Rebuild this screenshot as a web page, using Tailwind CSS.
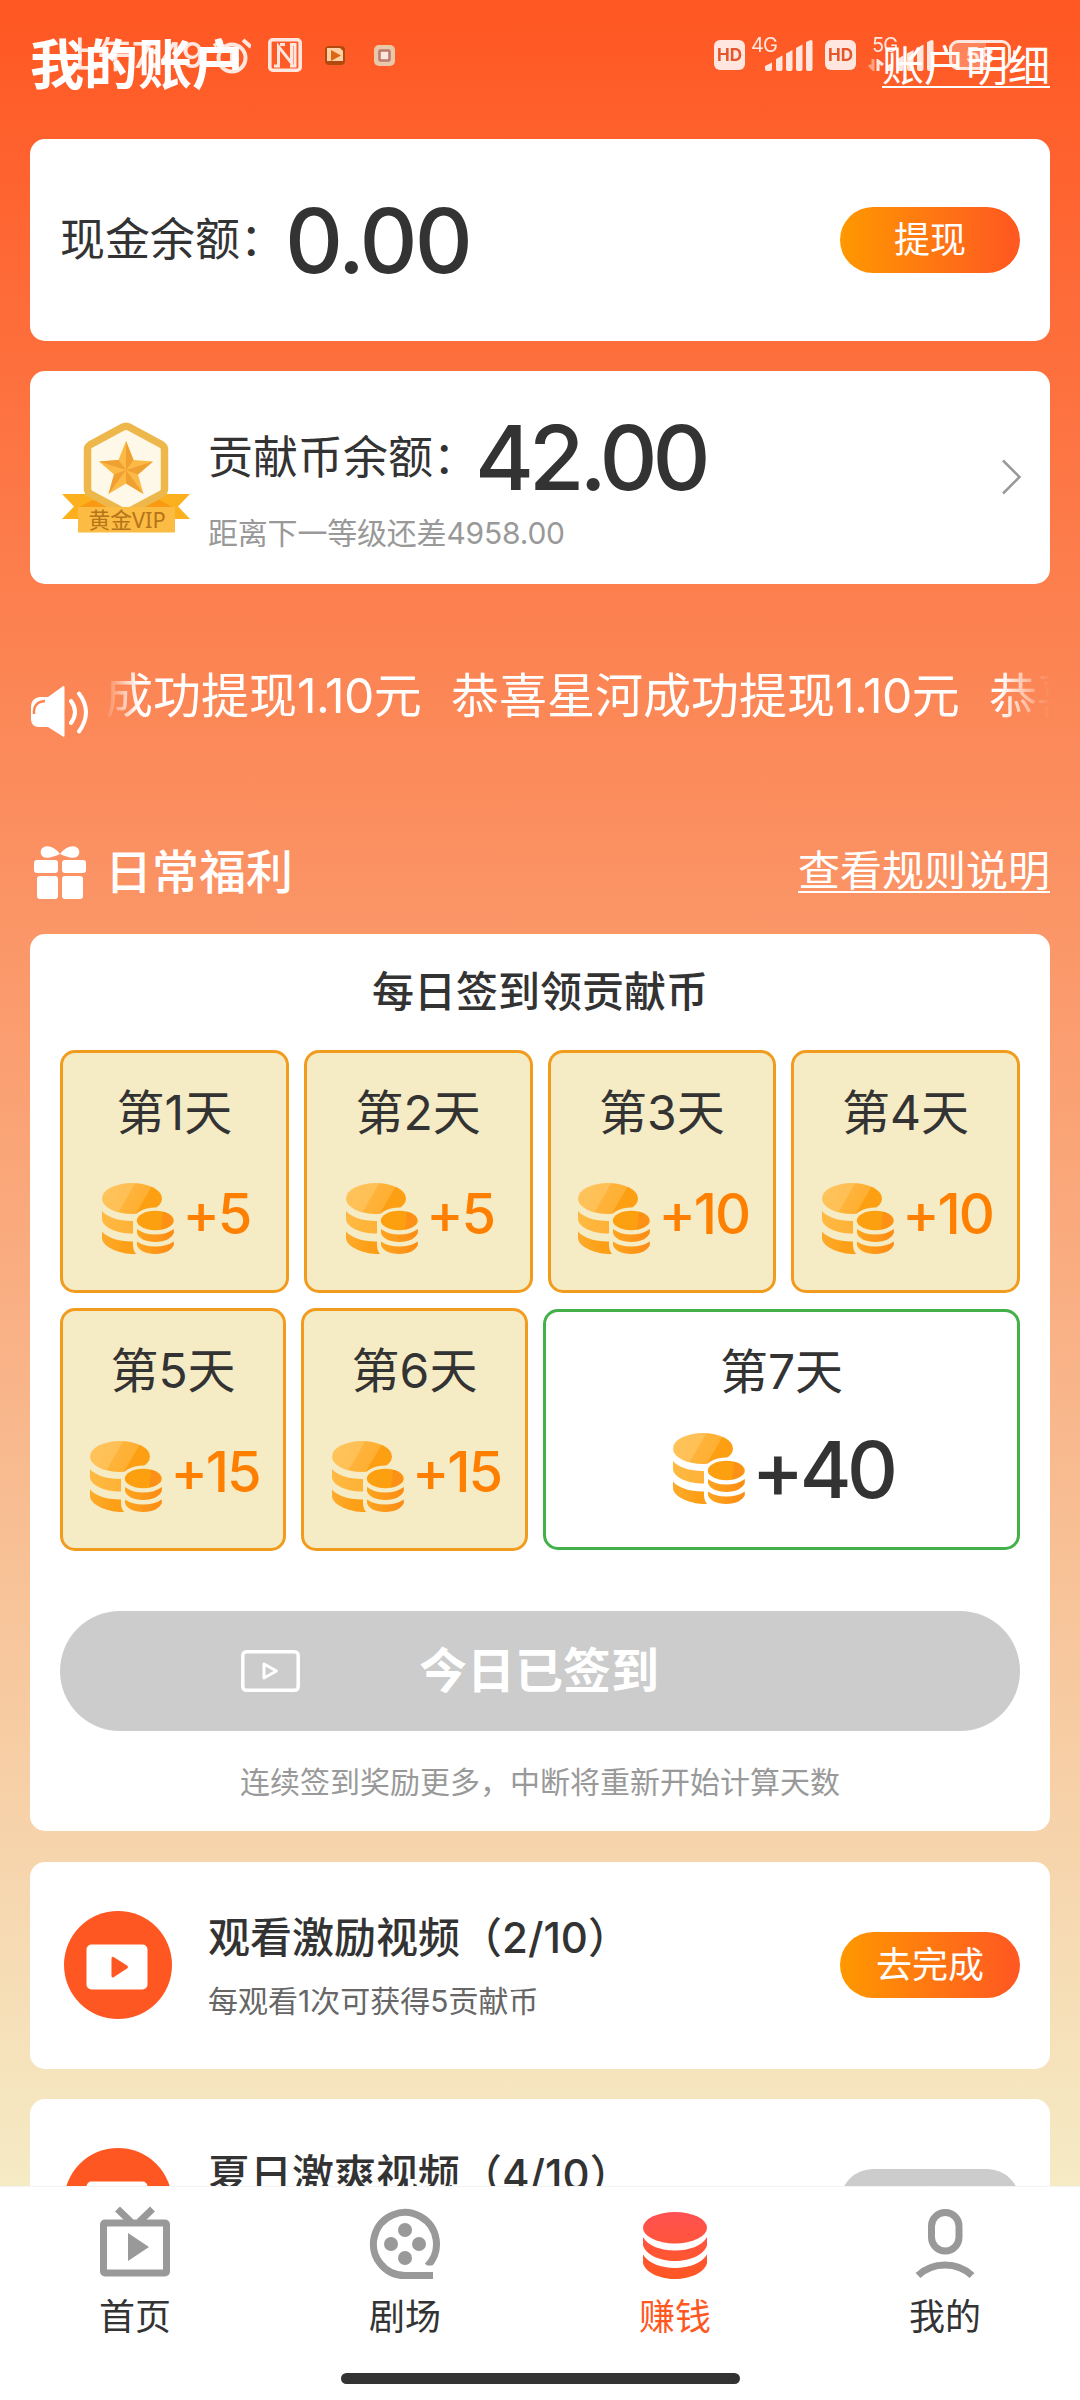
<!DOCTYPE html>
<html lang="zh-CN">
<head>
<meta charset="utf-8">
<title>我的账户</title>
<script src="https://cdn.jsdelivr.net/npm/@tailwindcss/browser@4"></script>
</head>
<body class="font-['Inter','Noto_Sans_CJK_SC',sans-serif] text-[#333]">

<svg class="absolute size-0" aria-hidden="true">
  <defs>
    <linearGradient id="coinTop" x1="0" y1="0" x2="1" y2="0.3">
      <stop offset="0" stop-color="#ffc45c"/><stop offset=".5" stop-color="#ffc055"/><stop offset=".52" stop-color="#ffb33a"/><stop offset=".78" stop-color="#ffb033"/><stop offset=".8" stop-color="#fd9f12"/><stop offset="1" stop-color="#fd9f12"/>
    </linearGradient>
    <linearGradient id="coinMid" x1="0" y1="0" x2="1" y2="0"><stop offset="0" stop-color="#ffb942"/><stop offset=".6" stop-color="#feb034"/></linearGradient>
    <linearGradient id="coinLow" x1="0" y1="0" x2="1" y2="0"><stop offset="0" stop-color="#fdab2c"/><stop offset=".4" stop-color="#fd9f16"/></linearGradient>
    <linearGradient id="coinSmall" x1="0" y1="0" x2="1" y2="0"><stop offset="0" stop-color="#fda51f"/><stop offset="1" stop-color="#fd8b13"/></linearGradient>
    <linearGradient id="earn" x1="0" y1="0" x2="0" y2="67" gradientUnits="userSpaceOnUse"><stop offset="0" stop-color="#ff5252"/><stop offset="1" stop-color="#ff5722"/></linearGradient>
    <mask id="coinGap" maskUnits="userSpaceOnUse" x="0" y="0" width="72" height="72">
      <rect width="72" height="72" fill="#fff"/>
      <path d="M31 38a22.5 13.5 0 0 1 45 0V72H35Q31 68 31 62Z" fill="#000"/>
    </mask>
  </defs>
  <symbol id="coins" viewBox="0 0 72 72">
    <g mask="url(#coinGap)">
      <ellipse cx="30" cy="15.5" rx="30" ry="15.5" fill="url(#coinTop)"/>
      <path d="M0 28C5 34 16 38 30 38S55 34 60 28V37C58 45 45 50.500 30 50.500S2 45 0 37Z" fill="url(#coinMid)"/>
      <path d="M0 48.500C5 54.500 16 58.500 30 58.500S55 54.500 60 48.500V56C58 64 45 71 32 71S2 65 0 56Z" fill="url(#coinLow)"/>
    </g>
    <ellipse cx="53.300" cy="37.500" rx="18.500" ry="9.700" fill="#fda010"/>
    <path d="M61 28.800A18.500 9.700 0 0 1 59 46.500Z" fill="#fd9016"/>
    <path d="M35 46Q42 51.500 53.300 51.500T71.800 46V50C70 55 63 59 53.300 59S36 55 35 50Z" fill="url(#coinSmall)"/>
    <path d="M35 58.500Q42 63.500 53.300 63.500T71.800 58.500V62C70 67 63 71 53.300 71S36 67 35 62Z" fill="url(#coinSmall)"/>
  </symbol>
  <symbol id="videoBadge" viewBox="0 0 108 108">
    <circle cx="54" cy="54" r="54" fill="#ff5722"/>
    <rect x="22.500" y="33.500" width="61" height="45" rx="5" fill="#fff"/>
    <path d="M47.500 47.500Q47.500 45 50 46.200L63 54.500Q65 56 63 57.500L50 66Q47.500 67.500 47.500 64.500Z" fill="#ff5722"/>
  </symbol>
  <symbol id="bars" viewBox="0 0 48 31">
    <path d="M0 29V26L7 22.500V29Q7 31 5 31H2Q0 31 0 29ZM11 19L17.500 15.500V29Q17.500 31 15.500 31H13Q11 31 11 29ZM21 13.500L27.500 10V29Q27.500 31 25.500 31H23Q21 31 21 29ZM31 8L37.500 4.500V29Q37.500 31 35.500 31H33Q31 31 31 29ZM41 2.500Q41 1.500 46 0Q47.500 0 47.500 1.500V29Q47.500 31 45.500 31H43Q41 31 41 29Z" fill="#fff"/>
  </symbol>
</svg>

<main class="relative flex h-[2400px] w-[1080px] flex-col overflow-hidden bg-white">
  <section class="flex h-[2186px] shrink-0 flex-col overflow-hidden bg-[linear-gradient(to_bottom,#ff5722,#f5ebc5)] px-[30px]">

    <header class="flex h-[139px] shrink-0 items-center justify-between pb-[7px] text-white">
      <h1 class="text-[54px] font-bold leading-[60px]">我的账户</h1>
      <a class="mt-[2px] flex h-[42px] items-center border-b-2 border-white text-[42px] leading-[42px]">账户明细</a>
    </header>

    <article class="flex h-[202px] shrink-0 items-center justify-between rounded-[15px] bg-white px-[30px]">
      <div class="flex items-center">
        <span class="text-[45px] leading-[60px]">现金余额：</span>
        <span class="pt-[2px] text-[90px] font-medium leading-[100px] tracking-[-3px]">0.00</span>
      </div>
      <button class="h-[66px] w-[180px] rounded-full bg-[linear-gradient(to_right,#ff9800,#ff5722)] pt-px text-[36px] leading-[65px] text-white">提现</button>
    </article>

    <article class="mt-[30px] flex h-[213px] shrink-0 rounded-[15px] bg-white pl-[30px] pr-[28px]">
      <svg class="mt-[50px] h-[114px] w-[132px]" viewBox="0 0 132 114">
        <path d="M2 73H34V98H2L14 85.500ZM130 73H98V98H130L118 85.500Z" fill="#fdb01e"/>
        <path d="M18 87L36 77L60 87ZM114 87L96 77L72 87Z" fill="#f99a12"/>
        <path d="M62 6.500Q66 4 70 6.500L101.500 23.500Q104.500 25.500 104.500 28V68Q104.500 71 101.500 73L66 92L30.500 73Q27.500 71 27.500 68V28Q27.500 25.500 30.500 23.500Z" fill="#fef8e8" stroke="#eeb74b" stroke-width="7.500" stroke-linejoin="round"/>
        <path d="M66 20L73.500 39L93 40.500L78 53.500L83.500 73L66 62.500L48.500 73L54 53.500L39 40.500L58.500 39Z" fill="#fdb945"/>
        <path d="M66 20V49L73.500 39ZM93 40.500L66 49L78 53.500ZM83.500 73L66 49V62.500ZM48.500 73L66 49L54 53.500ZM39 40.500L66 49L58.500 39Z" fill="#f0a030"/>
        <rect x="18" y="86" width="97" height="25.500" fill="#fcbb42"/>
        <text x="67" y="106.500" text-anchor="middle" font-size="21.800" fill="#b5741a" font-family="'Noto Sans','Noto Sans CJK SC',sans-serif">黄金VIP</text>
      </svg>
      <div class="flex flex-1 flex-col pl-4 pt-[37px]">
        <div class="flex h-[100px] items-center">
          <span class="text-[45px] leading-[60px]">贡献币余额：</span>
          <span class="-ml-[3px] text-[90px] font-medium leading-[100px] tracking-[-5px]">42.00</span>
        </div>
        <span class="text-[30px] leading-[50px] tracking-[-0.2px] text-[#999]">距离下一等级还差4958.00</span>
      </div>
      <svg class="mt-[88px] h-[36px] w-[22px]" viewBox="0 0 22 36" fill="none" stroke="#999" stroke-width="2.500"><path d="M3 1.500L19.500 18L3 34.500"/></svg>
    </article>

    <div class="flex h-[226px] shrink-0 pt-[80px]">
      <svg class="mt-[21px] h-[54px] w-[60px] shrink-0" viewBox="0 0 60 54">
        <path d="M10 12H18L33 1.200Q34.500 .5 34.500 2.500V50.500Q34.500 52.500 33 51.500L18 42H8Q1 41 1 34V22Q1 13 10 12Z" fill="#fff"/>
        <path d="M4 29Q3 17 15 16" fill="none" stroke="#fd8453" stroke-width="2.500"/>
        <path d="M41 16Q49 27 41 38M49 8.500Q63 27 49 46.500" fill="none" stroke="#fff" stroke-width="4" stroke-linecap="round"/>
      </svg>
      <div class="ml-[15px] flex h-[64px] w-[945px] overflow-hidden whitespace-nowrap text-[48px] leading-[64px] text-white mask-[linear-gradient(to_right,transparent,black_34px,black_895px,transparent)]">
        <div class="-ml-[192px] flex shrink-0">
          <span class="w-[538px]">恭喜星河成功提现<span class="tracking-[-0.6px]">1.10</span>元</span>
          <span class="w-[538px]">恭喜星河成功提现<span class="tracking-[-0.6px]">1.10</span>元</span>
          <span class="w-[538px]">恭喜星河成功提现<span class="tracking-[-0.6px]">1.10</span>元</span>
        </div>
      </div>
    </div>

    <div class="flex h-[124px] shrink-0 items-center text-white">
      <svg class="ml-1 h-[53px] w-[52px]" viewBox="0 0 52 53" fill="#fff">
        <path d="M26 8Q19-1 11 0.500Q5.500 3 7 8Q9 13 16 11.500Q23 9.500 26 8Q29 9.500 36 11.500Q43 13 45 8Q46.500 3 41 .5Q33-1 26 8Z"/>
        <rect x="0" y="14" width="24" height="13" rx="3"/><rect x="28" y="14" width="24" height="13" rx="3"/>
        <rect x="3" y="30" width="21" height="23" rx="3"/><rect x="28" y="30" width="21" height="23" rx="3"/>
      </svg>
      <h2 class="ml-[19px] text-[47px] font-medium leading-[60px]">日常福利</h2>
      <a class="ml-auto flex h-[42px] items-center border-b-2 border-white text-[42px] leading-[42px]">查看规则说明</a>
    </div>

    <article class="flex h-[897px] shrink-0 flex-col rounded-[15px] bg-white px-[30px]">
      <h3 class="mt-[28px] text-center text-[42px] font-medium leading-[60px]">每日签到领贡献币</h3>

      <div class="mt-[28px] grid grid-cols-4 gap-[15px]">
        <div class="flex h-[243px] flex-col items-center rounded-[15px] border-3 border-[#f29c1f] bg-[#f5ebc5] pt-[25px]">
          <span class="text-[48px] leading-[70px]">第1天</span>
          <div class="mt-[26px] flex h-[79px] items-center gap-2 pl-[4px] text-[56px] font-medium leading-[76px] tracking-[-2px] text-[#ff8000]"><svg class="mt-[10px] size-[72px]"><use href="#coins"/></svg>+5</div>
        </div>
        <div class="flex h-[243px] flex-col items-center rounded-[15px] border-3 border-[#f29c1f] bg-[#f5ebc5] pt-[25px]">
          <span class="text-[48px] leading-[70px]">第2天</span>
          <div class="mt-[26px] flex h-[79px] items-center gap-2 pl-[4px] text-[56px] font-medium leading-[76px] tracking-[-2px] text-[#ff8000]"><svg class="mt-[10px] size-[72px]"><use href="#coins"/></svg>+5</div>
        </div>
        <div class="flex h-[243px] flex-col items-center rounded-[15px] border-3 border-[#f29c1f] bg-[#f5ebc5] pt-[25px]">
          <span class="text-[48px] leading-[70px]">第3天</span>
          <div class="mt-[26px] flex h-[79px] items-center gap-2 pl-[4px] text-[56px] font-medium leading-[76px] tracking-[-2px] text-[#ff8000]"><svg class="mt-[10px] size-[72px]"><use href="#coins"/></svg>+10</div>
        </div>
        <div class="flex h-[243px] flex-col items-center rounded-[15px] border-3 border-[#f29c1f] bg-[#f5ebc5] pt-[25px]">
          <span class="text-[48px] leading-[70px]">第4天</span>
          <div class="mt-[26px] flex h-[79px] items-center gap-2 pl-[4px] text-[56px] font-medium leading-[76px] tracking-[-2px] text-[#ff8000]"><svg class="mt-[10px] size-[72px]"><use href="#coins"/></svg>+10</div>
        </div>
      </div>

      <div class="mt-[15px] flex h-[243px] items-center justify-between">
        <div class="flex h-[243px] w-[226px] flex-col items-center rounded-[15px] border-3 border-[#f29c1f] bg-[#f5ebc5] pt-[25px]">
          <span class="text-[48px] leading-[70px]">第5天</span>
          <div class="mt-[26px] flex h-[79px] items-center gap-2 pl-[4px] text-[56px] font-medium leading-[76px] tracking-[-2px] text-[#ff8000]"><svg class="mt-[10px] size-[72px]"><use href="#coins"/></svg>+15</div>
        </div>
        <div class="flex h-[243px] w-[227px] flex-col items-center rounded-[15px] border-3 border-[#f29c1f] bg-[#f5ebc5] pt-[25px]">
          <span class="text-[48px] leading-[70px]">第6天</span>
          <div class="mt-[26px] flex h-[79px] items-center gap-2 pl-[4px] text-[56px] font-medium leading-[76px] tracking-[-2px] text-[#ff8000]"><svg class="mt-[10px] size-[72px]"><use href="#coins"/></svg>+15</div>
        </div>
        <div class="flex h-[241px] w-[477px] flex-col items-center rounded-[15px] border-3 border-[#44b049] bg-white pt-[25px]">
          <span class="text-[48px] leading-[70px]">第7天</span>
          <div class="mt-[19px] flex items-center gap-[6px] pl-[4px] text-[79px] font-medium leading-[86px] tracking-[-4.5px]"><svg class="mb-px size-[72px]"><use href="#coins"/></svg>+40</div>
        </div>
      </div>

      <button class="mt-[60px] flex h-[120px] shrink-0 items-center rounded-full bg-[#ccc] pl-[181px] text-[48px] font-bold leading-[60px] text-white">
        <svg class="h-[42px] w-[59px]" viewBox="0 0 59 42" fill="none" stroke="#fff" stroke-width="3.500"><rect x="1.800" y="1.800" width="55.400" height="38.400" rx="3.500"/><path d="M23 14V28L35.500 21Z" stroke-width="3" stroke-linejoin="round"/></svg>
        <span class="ml-[119px]">今日已签到</span>
      </button>
      <p class="mt-[26px] text-center text-[30px] leading-[50px] text-[#999]">连续签到奖励更多，中断将重新开始计算天数</p>
    </article>

    <article class="mt-[31px] flex h-[207px] shrink-0 items-center rounded-[15px] bg-white px-[30px] pb-[2px]">
      <svg class="ml-1 size-[108px]"><use href="#videoBadge"/></svg>
      <div class="flex flex-1 flex-col pl-[36px] pt-[2px]">
        <span class="text-[42px] font-medium leading-[70px]">观看激励视频（2/10）</span>
        <span class="text-[30px] leading-[56px] text-[#666]">每观看1次可获得5贡献币</span>
      </div>
      <button class="h-[66px] w-[180px] rounded-full bg-[linear-gradient(to_right,#ff9800,#ff5722)] text-[36px] leading-[66px] text-white">去完成</button>
    </article>

    <article class="mt-[30px] flex h-[207px] shrink-0 items-center rounded-[15px] bg-white px-[30px] pb-[2px]">
      <svg class="ml-1 size-[108px]"><use href="#videoBadge"/></svg>
      <div class="flex flex-1 flex-col pl-[36px] pt-[2px]">
        <span class="text-[42px] font-medium leading-[70px]">夏日激爽视频（4/10）</span>
        <span class="text-[30px] leading-[56px] text-[#666]">每观看1次可获得5贡献币</span>
      </div>
      <button class="h-[66px] w-[180px] rounded-full bg-[#ccc] pt-[4px] text-[36px] leading-[62px] text-white">已完成</button>
    </article>
  </section>

  <nav class="grid h-[187px] shrink-0 grid-cols-4 border-t border-[#f3f3f3] bg-white pt-[18px] text-[36px] leading-[44px]">
    <a class="flex flex-col items-center">
      <svg class="h-[74px] w-[72px]" viewBox="0 -1 72 74" fill="none" stroke="#999" stroke-width="7"><rect x="4.500" y="17" width="63" height="50" rx="1.500"/><path d="M18.500 3L32 16M53.500 3L40 16"/><path d="M29 27V55L50 41Z" fill="#999" stroke="none"/></svg>
      <span class="mt-[16px]">首页</span>
    </a>
    <a class="flex flex-col items-center">
      <svg class="h-[74px] w-[72px]" viewBox="-1 -4 72 74" fill="none" stroke="#999" stroke-width="7"><path d="M63 66.500H35A31.500 31.500 0 1 1 57.500 57"/><path d="M50 56.500H64V63H50Z" fill="#fff" stroke="none"/><g fill="#999" stroke="none"><circle cx="35" cy="21" r="7"/><circle cx="21" cy="35" r="7"/><circle cx="49" cy="35" r="7"/><circle cx="35" cy="49" r="7"/></g></svg>
      <span class="mt-[16px]">剧场</span>
    </a>
    <a class="flex flex-col items-center text-[#ff5722]">
      <svg class="h-[74px] w-[72px]" viewBox="-4 -7 72 74" fill="url(#earn)"><ellipse cx="32" cy="15.700" rx="32" ry="15.700"/><path d="M0 25C5 34 18 38.500 32 38.500S59 34 64 25V33C62 42 48 49 32 49S2 42 0 33ZM0 42.500C5 51 18 56 32 56S59 51 64 42.500V51C62 60 48 67 32 67S2 60 0 51Z"/></svg>
      <span class="mt-[16px]">赚钱</span>
    </a>
    <a class="flex flex-col items-center">
      <svg class="h-[74px] w-[72px]" viewBox="-6 -4 72 74" fill="none" stroke="#999" stroke-width="7"><rect x="16.500" y="3.500" width="27.500" height="38.500" rx="13.700"/><path d="M3 66.500Q14 56 30 56T57 66.500"/></svg>
      <span class="mt-[16px]">我的</span>
    </a>
  </nav>
  <div class="mx-auto h-[11px] w-[399px] shrink-0 rounded-full bg-[#333]"></div>

  <!-- system status bar, drawn over the page header -->
  <div class="absolute inset-x-0 top-[35px] flex h-[40px] items-center justify-between pl-[63px] pr-[64px] text-white opacity-85">
    <div class="flex items-center">
      <span class="w-[148px] text-[36px] font-medium leading-[40px] tracking-[-1.5px]">上午7:49</span>
      <svg class="h-[38px] w-[40px]" viewBox="0 0 40 38" fill="none" stroke="#fff" stroke-width="4"><circle cx="21" cy="22" r="13.500"/><path d="M21 14V23H28M3 10L11 4M32 4L40 11"/></svg>
      <svg class="ml-[17px] size-[34px]" viewBox="0 0 34 34" fill="none" stroke="#fff" stroke-width="3"><rect x="1.800" y="1.800" width="30.400" height="30.400" rx="3" stroke-width="3.600"/><path d="M10.500 28V8.500L23.500 25V8M6 28H12M12 6.500H17M22 6.500H27V28H22"/></svg>
      <svg class="ml-[23px] size-[21px]" viewBox="0 0 21 21"><rect x="0" y="1" width="20" height="19" rx="4" fill="#a5480c"/><path d="M2 3H15L18 6V16H2Z" fill="#ffe6ba"/><path d="M6 5L16 10.500L6 16Z" fill="#d56a12"/></svg>
      <svg class="ml-[28px] size-[21px]" viewBox="0 0 21 21"><rect width="21" height="21" rx="5" fill="#e4dcc0"/><rect x="5.500" y="5.500" width="10" height="10" rx="1" fill="#fff" stroke="#b08078" stroke-width="2.500"/></svg>
    </div>
    <div class="flex items-center">
      <span class="h-[30px] w-[31px] rounded-[6px] bg-white text-center text-[17px] font-bold leading-[30px] text-[#e0552c]">HD</span>
      <div class="relative ml-[20px] h-[31px] w-[48px]"><svg class="h-[31px] w-[48px]"><use href="#bars"/></svg><span class="absolute -left-[14px] -top-[5px] text-[20px] leading-[20px] tracking-[-1px]">4G</span></div>
      <span class="ml-[12px] h-[30px] w-[31px] rounded-[6px] bg-white text-center text-[17px] font-bold leading-[30px] text-[#e0552c]">HD</span>
      <div class="relative ml-[30px] h-[31px] w-[48px]"><svg class="h-[31px] w-[48px]"><use href="#bars"/></svg><span class="absolute -left-[14px] -top-[5px] text-[20px] leading-[20px] tracking-[-1px]">5G</span>
        <svg class="absolute -left-[18px] top-[19px] h-[12px] w-[16px]" viewBox="0 0 16 12" fill="none" stroke="#fff" stroke-width="3"><path d="M5 0V10L1 6" opacity=".5"/><path d="M10 12V2L15 6"/></svg></div>
      <span class="ml-[15px] h-[30px] w-[62px] rounded-[9px] border-3 border-white bg-[linear-gradient(to_right,rgb(255_255_255_/_0.3)_60%,transparent_60%)] text-center text-[22px] font-bold leading-[24px]">58</span>
      <span class="ml-[2px] h-[10px] w-[3px] rounded-full bg-white"></span>
    </div>
  </div>
</main>
</body>
</html>
